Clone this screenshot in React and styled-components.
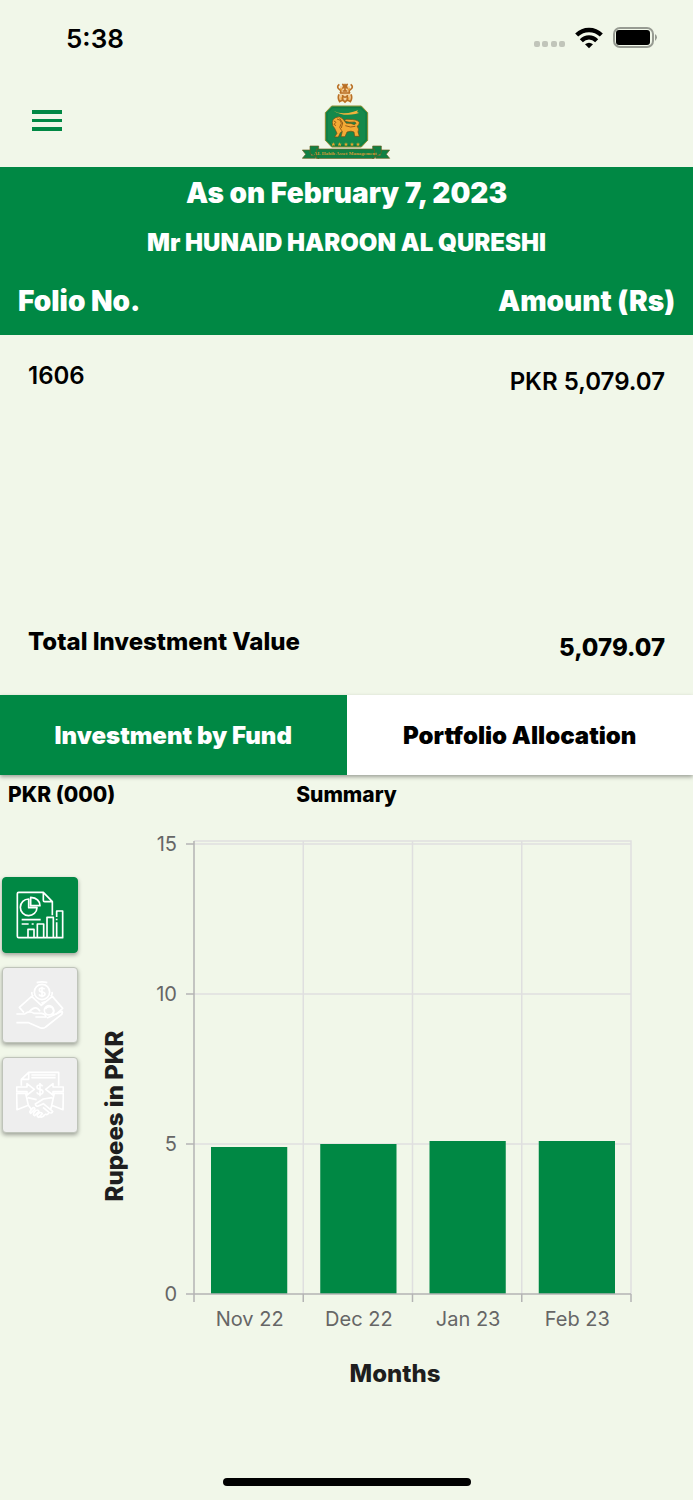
import React, { useState } from "react";
import styled, { createGlobalStyle, ThemeProvider } from "styled-components";

const theme = {
  main: "#008844",
  background: "#f1f7e9",
  color: "#000",
  muted: "#666",
  grid: "#dfdfdf",
  axis: "#b4b4b4",
  disabled: "#eee",
};

const GlobalStyle = createGlobalStyle`
  * {
    box-sizing: border-box;
  }

  body {
    margin: 0;
    background: ${theme.background};
    color: ${theme.color};
    font-family: Inter, "Liberation Sans", sans-serif;
  }
`;

const Page = styled.div`
  display: flex;
  flex-direction: column;
  min-height: 100vh;
`;

const StatusBar = styled.div`
  display: flex;
  align-items: center;
  justify-content: space-between;
  height: 76px;
  padding: 0 36px 0 66px;
`;

const Time = styled.span`
  font-size: 26px;
  font-weight: 600;
`;

const StatusIcons = styled.div`
  display: flex;
  align-items: center;
  gap: 10px;
`;

const AppBar = styled.header`
  display: grid;
  grid-template-columns: 1fr auto 1fr;
  align-items: center;
  height: 91px;
  padding: 0 32px 2px;
`;

const MenuButton = styled.button`
  display: flex;
  width: 30px;
  padding: 0;
  border: none;
  background: none;
  cursor: pointer;
`;

const Banner = styled.section`
  display: flex;
  flex-direction: column;
  align-items: center;
  height: 108px;
  padding-top: 1px;
  background: ${({ theme }) => theme.main};
  color: #fff;
`;

const AsOn = styled.h1`
  margin: 0;
  font-size: 28px;
  font-weight: 900;
  line-height: 50px;
`;

const Holder = styled.h2`
  margin: 0;
  font-size: 24px;
  font-weight: 900;
  line-height: 50px;
`;

const FolioTable = styled.table`
  width: 100%;
  height: 420px;
  border-collapse: collapse;
  font-size: 24px;
  line-height: 30px;
`;

const HeadCell = styled.th`
  height: 60px;
  padding: 0 18px 8px;
  background: ${({ theme }) => theme.main};
  color: #fff;
  font-size: 28px;
  font-weight: 900;
  text-align: ${({ $right }) => ($right ? "right" : "left")};
`;

const Cell = styled.td`
  height: ${({ $total }) => ($total ? "70px" : "auto")};
  padding: ${({ $right, $total }) => ($total ? ($right ? 8 : 2) : $right ? 32 : 26)}px 28px 0;
  font-weight: ${({ $total }) => ($total ? 800 : 600)};
  text-align: ${({ $right }) => ($right ? "right" : "left")};
  vertical-align: top;
`;

const Tabs = styled.div`
  display: flex;
  box-shadow: 0 2px 4px rgba(0, 0, 0, 0.35);
`;

const Tab = styled.button`
  flex: 1;
  height: 80px;
  padding: 0;
  border: none;
  background: ${({ theme, $active }) => ($active ? theme.main : "#fff")};
  color: ${({ theme, $active }) => ($active ? "#fff" : theme.color)};
  font-family: inherit;
  font-size: 24px;
  font-weight: 900;
  cursor: pointer;
`;

const Caption = styled.div`
  display: grid;
  grid-template-columns: 1fr auto 1fr;
  padding: 0 8px;
  font-size: 21px;
  font-weight: 800;
  line-height: 40px;
`;

const ChartArea = styled.section`
  display: flex;
  align-items: flex-start;
`;

const Rail = styled.nav`
  display: flex;
  flex-direction: column;
  gap: 14px;
  width: 80px;
  padding: 62px 2px 0;
`;

const RailButton = styled.button`
  display: flex;
  align-items: center;
  justify-content: center;
  height: 76px;
  padding: 0;
  border: 1px solid ${({ theme, $active }) => ($active ? theme.main : "#bfc4ba")};
  border-radius: 4px;
  background: ${({ theme, $active }) => ($active ? theme.main : theme.disabled)};
  box-shadow: 0 2px 4px rgba(0, 0, 0, 0.35);
  cursor: pointer;
`;

const LineIcon = styled.svg`
  width: 48px;
  height: 48px;
  fill: none;
  stroke: #fff;
  stroke-width: 5;
  stroke-linejoin: round;
`;

const Chart = styled.svg`
  flex: 1;
  min-width: 0;
`;

const AxisLabel = styled.text`
  fill: ${({ theme }) => theme.muted};
  font-size: 20px;
`;

const AxisTitle = styled.text`
  fill: #1e1e1e;
  font-size: 24px;
  font-weight: 800;
`;

const HomeBar = styled.div`
  width: 248px;
  height: 8px;
  margin: auto auto 14px;
  border-radius: 4px;
  background: #000;
`;

const Signal = () => (
  <svg width="32" height="18" viewBox="0 0 32 18" fill="#c1c5ba">
    {[1, 9, 18, 26].map((x) => (
      <rect key={x} x={x} y="12" width="6" height="6" rx="2" />
    ))}
  </svg>
);

const Wifi = () => (
  <svg width="28" height="22" viewBox="0 0 84 66">
    <g fill="none" stroke="#000" strokeWidth="13">
      <path d="M5 24C26 4 58 4 79 24" />
      <path d="M19 41C32 28 52 28 65 41" />
    </g>
    <path d="M42 64L30 52Q42 42 54 52Z" />
  </svg>
);

const Battery = () => (
  <svg width="44" height="22" viewBox="0 0 44 22">
    <rect x="1" y="1" width="39" height="19" rx="6" fill="none" stroke="#979b92" strokeWidth="2" />
    <rect x="3" y="3" width="34" height="15" rx="3" />
    <path d="M42 7Q46 10 42 14Z" fill="#979b92" />
  </svg>
);

const Star = ({ x }) => (
  <path transform={`translate(${x} 206)`} d="M0-6L2-2 6-2 3 1 4 6 0 3-4 6-3 1-6-2-2-2Z" fill="#e6a42a" />
);

const Emblem = () => (
  <svg width="89" height="76" viewBox="36 22 267 228" role="img" aria-label="AL Habib Asset Management">
    <path d="M150 32L180 32 177 50 186 62 183 78 165 80 147 78 144 62 153 50Z" fill="#f4d3a0" />
    <g fill="none" stroke="#b96f24" strokeWidth="5">
      <path d="M148 26q-10 8 0 15q8 5 2 12M182 26q10 8 0 15q-8 5-2 12M157 25q8 6 0 14M173 25q-8 6 0 14M158 46h14M165 24v24" />
      <path d="M147 56q-5 10 2 22l9-6v-14M183 56q5 10-2 22l-9-6v-14M158 61q7 7 14 0M158 72l7 7 7-7M153 52h24" />
    </g>
    <path d="M150 36l8 4-5 6zM180 36l-8 4 5 6zM152 62l5 6-5 6zM178 62l-5 6 5 6z" fill="#e89a35" />
    <path d="M125 91H214L233 111V194L214 214H125L106 194V111Z" fill="#14894b" stroke="#8f8a2c" strokeWidth="3" />
    <path d="M128 96H211L228 113V192L211 209H128L111 192V113Z" fill="none" stroke="#0c6c3a" strokeWidth="2" />
    <path d="M130 105Q155 119 190 108L204 104 201 109 207 112 196 115Q158 123 130 105Z" fill="#eeb23c" />
    <path
      d="M137 126Q149 119 159 130L169 143Q183 141 193 147Q203 142 193 139Q178 141 166 137Q161 130 174 131Q205 131 208 141Q208 148 201 152Q209 160 204 169L208 182H194L192 169Q184 164 171 169L165 183H153L157 167 151 171 145 184H134L141 173 134 158Q126 151 127 140Q127 130 137 126Z"
      fill="#f3aa35"
      stroke="#694b17"
      strokeWidth="2"
    />
    <path d="M141 130l10 4 3 9-5 12 6 10M132 136l6 4-6 6 6 4M149 128l9 14-4 15M166 150q16 7 30 2" fill="none" stroke="#9b5d15" strokeWidth="3" />
    {[130, 149, 168, 186, 204].map((x) => (
      <Star key={x} x={x} />
    ))}
    <g fill="#108044" stroke="#695f20" strokeWidth="2">
      <path d="M37 223H63V239H77V248H37L47 236Z" />
      <path d="M299 223H271V239H257V248H299L289 236Z" />
      <path d="M60 211H86V249L60 233Z" />
      <path d="M274 211H248V249L274 233Z" />
      <rect x="79" y="220" width="174" height="28" />
    </g>
    <text x="166" y="239" textAnchor="middle" fontFamily="Liberation Serif, serif" fontSize="15" fontWeight="700" fill="#d29a36">
      AL Habib Asset Management
    </text>
  </svg>
);

// all three rail icons share a 144 unit box
const ReportIcon = () => (
  <LineIcon viewBox="0 0 144 144">
    <path d="M109 73V32L82 4H8Q4 4 4 8V136Q4 140 8 140H140V60H122V78M122 83V88M122 94V139M82 4V28Q82 32 86 32H109" />
    <path d="M38 24A25 25 0 1 0 63 50H38ZM44 19V44H72Q71 21 44 19Z" />
    <path d="M17 86H74M17 99H38M47 99H53M36 140V115H54V140M64 140V99H83V140M93 140V79H112V140" />
  </LineIcon>
);

const InvestIcon = () => (
  <LineIcon viewBox="0 0 144 144">
    <circle cx="78" cy="33" r="23" />
    <path d="M62 5Q78 0 94 5M48 33Q46 43 52 46M108 33Q110 43 104 46" />
    <path d="M86 25Q83 21 78 21Q70 21 70 27Q70 32 78 33Q87 34 87 39Q87 45 78 45Q71 45 69 40M78 17V49" />
    <path d="M47 46L10 79 24 95M109 46L140 82 120 100M47 46L76 73 109 46M76 66L90 62M40 92Q60 70 72 91" />
    <path d="M1 99H26Q39 87 54 97H77Q89 99 90 108H58M88 84Q96 72 109 80Q119 94 107 103M93 111L138 91Q142 98 132 104L89 138Q84 143 74 141L38 125H1" />
    <circle cx="99" cy="88" r="14" />
  </LineIcon>
);

const PartnerIcon = () => (
  <LineIcon viewBox="0 0 144 144">
    <path d="M16 44V25L38 4H128V44M38 4V25H16M46 12H119M46 20H119" />
    <path d="M2 48H33V38L55 55 33 72V62H2ZM142 48H111V38L89 55 111 72V62H142Z" />
    <path d="M80 46Q77 41 71 42Q63 42 63 48Q63 54 72 55Q81 57 81 63Q80 70 72 70Q65 70 62 64M72 36V76" />
    <path d="M2 67H29L37 103 3 116ZM142 67H115L107 103 141 116ZM35 80L62 86M109 80L82 84 58 99Q59 110 72 103L82 98 110 121Q107 129 99 124L81 109M37 103L48 118M107 103L104 116" />
    <path d="M48 113Q38 123 44 127L57 114Q54 106 48 113M57 121Q48 131 56 134L69 121Q65 113 57 121M67 128Q60 136 68 139L79 128Q76 121 67 128M98 125Q95 134 87 129M86 130Q82 141 70 137" />
  </LineIcon>
);

const railItems = [
  { label: "Summary", Icon: ReportIcon },
  { label: "Investments", Icon: InvestIcon },
  { label: "Transactions", Icon: PartnerIcon },
];

const months = [
  { name: "Nov 22", value: 4.9 },
  { name: "Dec 22", value: 5 },
  { name: "Jan 23", value: 5.1 },
  { name: "Feb 23", value: 5.1 },
];

const LEFT = 114;
const RIGHT = 551;
const TOP = 26;
const BASE = 479;
const UNIT = 30;
const BAND = (RIGHT - LEFT) / months.length;

const yOf = (value) => BASE - value * UNIT;

const BarChart = () => (
  <Chart viewBox="0 0 613 580" role="img" aria-label="Rupees in PKR by month">
    <g stroke={theme.grid} strokeWidth="1.5">
      <path d={`M${LEFT} ${TOP}H${RIGHT}V${BASE}`} fill="none" />
      {[5, 10, 15].map((tick) => (
        <path key={tick} d={`M${LEFT} ${yOf(tick)}H${RIGHT}`} />
      ))}
      {[1, 2, 3].map((i) => (
        <path key={i} d={`M${LEFT + i * BAND} ${TOP}V${BASE}`} />
      ))}
    </g>
    {months.map(({ name, value }, i) => (
      <rect
        key={name}
        x={LEFT + i * BAND + 17}
        y={yOf(value)}
        width={BAND - 33}
        height={value * UNIT}
        fill={theme.main}
      />
    ))}
    <g stroke={theme.axis} strokeWidth="1.5">
      <path d={`M${LEFT} ${TOP}V${BASE + 8}M${LEFT} ${BASE}H${RIGHT}`} />
      {[0, 5, 10, 15].map((tick) => (
        <path key={tick} d={`M${LEFT - 8} ${yOf(tick)}H${LEFT}`} />
      ))}
      {[1, 2, 3, 4].map((i) => (
        <path key={i} d={`M${LEFT + i * BAND} ${BASE}V${BASE + 8}`} />
      ))}
    </g>
    {[0, 5, 10, 15].map((tick) => (
      <AxisLabel key={tick} x={LEFT - 17} y={yOf(tick) + 7} textAnchor="end">
        {tick}
      </AxisLabel>
    ))}
    {months.map(({ name }, i) => (
      <AxisLabel key={name} x={LEFT + (i + 0.5) * BAND + 1} y={BASE + 32} textAnchor="middle">
        {name}
      </AxisLabel>
    ))}
    <AxisTitle transform="translate(43 301) rotate(-90)" textAnchor="middle">
      Rupees in PKR
    </AxisTitle>
    <AxisTitle x="315" y="567" textAnchor="middle">
      Months
    </AxisTitle>
  </Chart>
);

export default function App() {
  const [tab, setTab] = useState(0);
  const [view, setView] = useState(0);

  return (
    <ThemeProvider theme={theme}>
      <GlobalStyle />
      <Page>
        <StatusBar>
          <Time>5:38</Time>
          <StatusIcons>
            <Signal />
            <Wifi />
            <Battery />
          </StatusIcons>
        </StatusBar>
        <AppBar>
          <MenuButton aria-label="Menu">
            <svg width="30" height="21" viewBox="0 0 30 21" fill={theme.main}>
              <path d="M0 0H30V4H0ZM0 9H30V12H0ZM0 17H30V21H0Z" />
            </svg>
          </MenuButton>
          <Emblem />
        </AppBar>
        <Banner>
          <AsOn>As on February 7, 2023</AsOn>
          <Holder>Mr HUNAID HAROON AL QURESHI</Holder>
        </Banner>
        <FolioTable>
          <thead>
            <tr>
              <HeadCell scope="col">Folio No.</HeadCell>
              <HeadCell scope="col" $right>
                Amount (Rs)
              </HeadCell>
            </tr>
          </thead>
          <tbody>
            <tr>
              <Cell>1606</Cell>
              <Cell $right>PKR 5,079.07</Cell>
            </tr>
          </tbody>
          <tfoot>
            <tr>
              <Cell $total>Total Investment Value</Cell>
              <Cell $total $right>
                5,079.07
              </Cell>
            </tr>
          </tfoot>
        </FolioTable>
        <Tabs>
          {["Investment by Fund", "Portfolio Allocation"].map((label, i) => (
            <Tab key={label} $active={tab === i} onClick={() => setTab(i)}>
              {label}
            </Tab>
          ))}
        </Tabs>
        <Caption>
          <span>PKR (000)</span>
          <span>Summary</span>
        </Caption>
        <ChartArea>
          <Rail>
            {railItems.map(({ label, Icon }, i) => (
              <RailButton key={label} aria-label={label} $active={view === i} onClick={() => setView(i)}>
                <Icon />
              </RailButton>
            ))}
          </Rail>
          <BarChart />
        </ChartArea>
        <HomeBar />
      </Page>
    </ThemeProvider>
  );
}
